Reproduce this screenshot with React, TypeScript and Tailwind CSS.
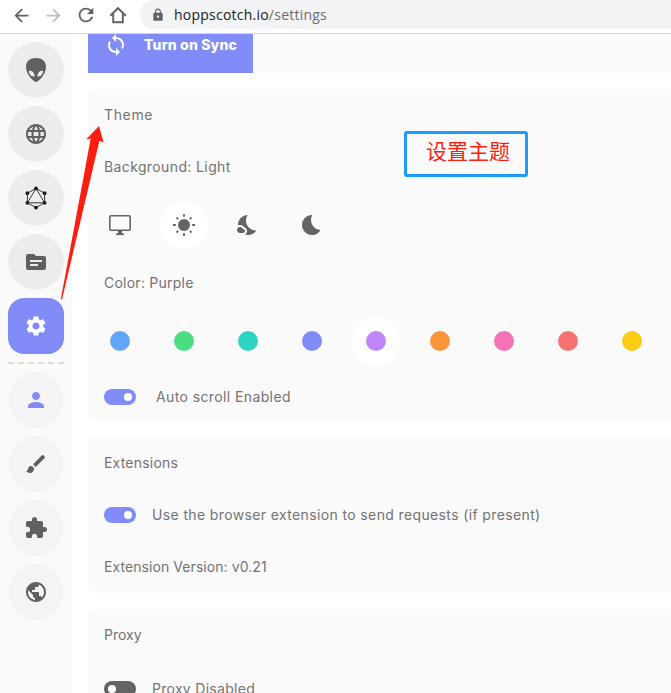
import React from "react";
import {
  MdLanguage,
  MdTopic,
  MdSettings,
  MdPerson,
  MdBrush,
  MdExtension,
  MdPublic,
  MdSync,
  MdNightsStay,
  MdBedtime,
  MdLock,
  MdArrowBack,
  MdArrowForward,
  MdRefresh,
} from "react-icons/md";

function HomeIcon() {
  return (
    <svg width="18" height="18" viewBox="0 0 18 18" fill="none" stroke="#5f6368" strokeWidth="1.9">
      <path d="M1.200 9.800 9 2.200l7.800 7.600M4.200 7.800v8.400h9.600V7.800" />
    </svg>
  );
}

function AlienIcon() {
  return (
    <svg width="24" height="24" viewBox="0 0 24 24">
      <path
        fill="#606060"
        d="M12 0C6 0 2 2.800 2 9c0 4 2.200 8.200 5.200 11.600C9.300 23 10.800 24 12 24s2.700-1 4.800-3.400C19.800 17.200 22 13 22 9c0-6.200-4-9-10-9z"
      />
      <path
        fill="#ececec"
        d="M4.900 12.700c3-.3 5.500 1.400 5.700 5.700-3 .3-5.600-1.700-5.700-5.700zM19.100 12.700c-3-.3-5.500 1.400-5.700 5.700 3 .3 5.600-1.700 5.700-5.700z"
      />
    </svg>
  );
}

function GraphIcon() {
  const nodes = [
    [12, 2.4],
    [20.6, 7.2],
    [20.6, 16.8],
    [12, 21.6],
    [3.4, 16.8],
    [3.4, 7.2],
  ];
  return (
    <svg width="24" height="24" viewBox="0 0 24 24" fill="none" stroke="#3a3a3a" strokeWidth="1">
      <path d="M12 2.400 20.600 7.200v9.600L12 21.600l-8.600-4.800V7.200zM12 2.400l8.600 14.400H3.400z" />
      {nodes.map(([x, y]) => (
        <circle key={`${x}-${y}`} cx={x} cy={y} r="1.900" fill="#1c1c1c" stroke="none" />
      ))}
    </svg>
  );
}

function MonitorIcon() {
  return (
    <svg width="24" height="24" viewBox="0 0 24 24" fill="none" stroke="#646464" strokeWidth="1.600">
      <rect x="1.800" y="2.800" width="20.400" height="14.400" rx="1.200" />
      <path d="M8 21.200h8" strokeWidth="1.800" />
      <path d="M12 17v4" strokeWidth="4" />
    </svg>
  );
}

function SunIcon() {
  return (
    <svg width="24" height="24" viewBox="0 0 24 24" fill="#646464" stroke="#646464" strokeWidth="1.800">
      <circle cx="12" cy="12" r="6" stroke="none" />
      <path d="M12 1v2.800M12 20.200V23M1 12h2.800M20.200 12H23M4.500 4.500l1.700 1.700M17.800 17.800l1.700 1.700M4.500 19.500l1.700-1.700M17.800 6.200l1.700-1.700" />
    </svg>
  );
}

function NavItem({ children, className }: { children: React.ReactNode; className: string }) {
  return (
    <a className={`flex size-14 shrink-0 items-center justify-center ${className}`}>{children}</a>
  );
}

function Toggle({ on }: { on: boolean }) {
  return (
    <span
      className={`flex h-4 w-8 shrink-0 items-center rounded-full px-1 ${
        on ? "justify-end bg-[#818cf8]" : "justify-start bg-[#646464]"
      }`}
    >
      <span className="size-2 rounded-full bg-white" />
    </span>
  );
}

const swatches = [
  "bg-[#60a5fa]",
  "bg-[#4ade80]",
  "bg-[#2dd4bf]",
  "bg-[#818cf8]",
  "bg-[#c084fc]",
  "bg-[#fb923c]",
  "bg-[#f472b6]",
  "bg-[#f87171]",
  "bg-[#facc15]",
];

export default function App() {
  return (
    <div className="relative flex h-[693px] w-[671px] flex-col overflow-hidden bg-white font-['Inter',sans-serif] text-sm text-[#737373]">
      <header className="flex h-[34px] shrink-0 items-start border-b border-[#d4d5d7] bg-white text-[#5f6368]">
        <div className="flex h-[30px] w-[140px] shrink-0 items-center pl-[11px]">
          <MdArrowBack size={21} />
          <MdArrowForward size={21} className="ml-[11px] text-[#bbbdbf]" />
          <MdRefresh size={22} className="ml-[11px]" />
          <span className="ml-3">
            <HomeIcon />
          </span>
        </div>
        <div className="flex h-[29px] flex-1 items-center rounded-l-full bg-[#f1f3f4] pl-[11px]">
          <MdLock size={14} />
          <span className="ml-[9px] whitespace-nowrap font-['Open_Sans',sans-serif] text-[14px] tracking-[0.23px] text-[#6b6f73]">
            <span className="text-[#202124]">hoppscotch.io</span>/settings
          </span>
        </div>
      </header>

      <div className="flex min-h-0 flex-1">
        <aside className="flex w-[72px] shrink-0 flex-col items-center gap-2 bg-[#fafafa] pt-2 text-[#606060]">
          <NavItem className="rounded-full bg-[#ececec]">
            <AlienIcon />
          </NavItem>
          <NavItem className="rounded-full bg-[#ececec]">
            <MdLanguage size={24} />
          </NavItem>
          <NavItem className="rounded-full bg-[#ececec]">
            <GraphIcon />
          </NavItem>
          <NavItem className="rounded-full bg-[#ececec]">
            <MdTopic size={24} />
          </NavItem>
          <NavItem className="rounded-2xl bg-[#818cf8] text-white">
            <MdSettings size={24} />
          </NavItem>
          <div className="h-0.5 w-14 shrink-0 bg-[repeating-linear-gradient(90deg,#dedede_0_6px,transparent_6px_10px)]" />
          <NavItem className="rounded-full bg-[#f4f4f4] text-[#818cf8]">
            <MdPerson size={24} />
          </NavItem>
          <NavItem className="rounded-full bg-[#f4f4f4]">
            <MdBrush size={24} />
          </NavItem>
          <NavItem className="rounded-full bg-[#f4f4f4]">
            <MdExtension size={24} />
          </NavItem>
          <NavItem className="rounded-full bg-[#f4f4f4]">
            <MdPublic size={24} />
          </NavItem>
        </aside>

        <main className="flex min-w-0 flex-1 flex-col gap-4 pl-4">
          <section className="flex h-[39px] shrink-0 bg-[#fafafa]">
            <button className="flex h-[39px] w-[165px] items-start bg-[#818cf8] pl-4 text-white">
              <MdSync size={24} className="-mt-px shrink-0" />
              <span className="ml-4 whitespace-nowrap text-[14px] leading-[22px] font-extrabold tracking-[0.17px]">
                Turn on Sync
              </span>
            </button>
          </section>

          <section className="flex h-[332px] shrink-0 flex-col rounded-l-lg bg-[#fafafa] pl-4">
            <h2 className="h-[52px] leading-[52px] tracking-[0.65px]">Theme</h2>
            <p className="h-[52px] leading-[52px] tracking-[0.38px]">Background: Light</p>
            <div className="-ml-2 flex h-16 items-center gap-4 text-[#646464]">
              <span className="flex size-12 items-center justify-center">
                <MonitorIcon />
              </span>
              <span className="flex size-12 items-center justify-center rounded-full bg-white">
                <SunIcon />
              </span>
              <span className="flex size-12 items-center justify-center">
                <MdNightsStay size={24} />
              </span>
              <span className="flex size-12 items-center justify-center">
                <MdBedtime size={24} />
              </span>
            </div>
            <p className="h-[52px] leading-[52px] tracking-[0.24px]">Color: Purple</p>
            <div className="-ml-2 flex h-16 items-center gap-4">
              {swatches.map((color, i) => (
                <span
                  key={color}
                  className={`flex size-12 shrink-0 items-center justify-center rounded-full ${
                    i === 4 ? "bg-white" : ""
                  }`}
                >
                  <span className={`size-5 rounded-full ${color}`} />
                </span>
              ))}
            </div>
            <div className="flex h-12 items-center">
              <Toggle on />
              <span className="ml-5 whitespace-nowrap tracking-[0.39px]">Auto scroll Enabled</span>
            </div>
          </section>

          <section className="flex h-[156px] shrink-0 flex-col rounded-l-lg bg-[#fafafa] pl-4">
            <h2 className="h-[52px] leading-[52px] tracking-[0.2px]">Extensions</h2>
            <div className="flex h-[52px] items-center">
              <Toggle on />
              <span className="ml-4 whitespace-nowrap tracking-[0.37px]">
                Use the browser extension to send requests (if present)
              </span>
            </div>
            <p className="h-[52px] leading-[52px] tracking-[0.07px]">Extension Version: v0.21</p>
          </section>

          <section className="flex h-[156px] shrink-0 flex-col rounded-l-lg bg-[#fafafa] pl-4">
            <h2 className="h-[52px] leading-[52px]">Proxy</h2>
            <div className="flex h-14 items-center">
              <Toggle on={false} />
              <span className="ml-4 whitespace-nowrap tracking-[0.29px]">Proxy Disabled</span>
            </div>
          </section>
        </main>
      </div>

      <div className="absolute top-[131px] left-[404px] flex h-[46px] w-[124px] justify-center rounded-[3px] border-[3px] border-[#1e9bff] pl-1 font-['Noto_Sans_CJK_SC',sans-serif] text-[21px] leading-[33px] font-normal whitespace-nowrap text-[#ff1d0f]">
        设置主题
      </div>
      <svg className="absolute top-[120px] left-[56px]" width="54" height="184" viewBox="56 120 54 184">
        <path fill="#ff1d0f" d="M99 126 86 139.600l4.700-1.200L60.800 299.300l1.200.2L99.400 140.800l4.200 1.800z" />
      </svg>
    </div>
  );
}
